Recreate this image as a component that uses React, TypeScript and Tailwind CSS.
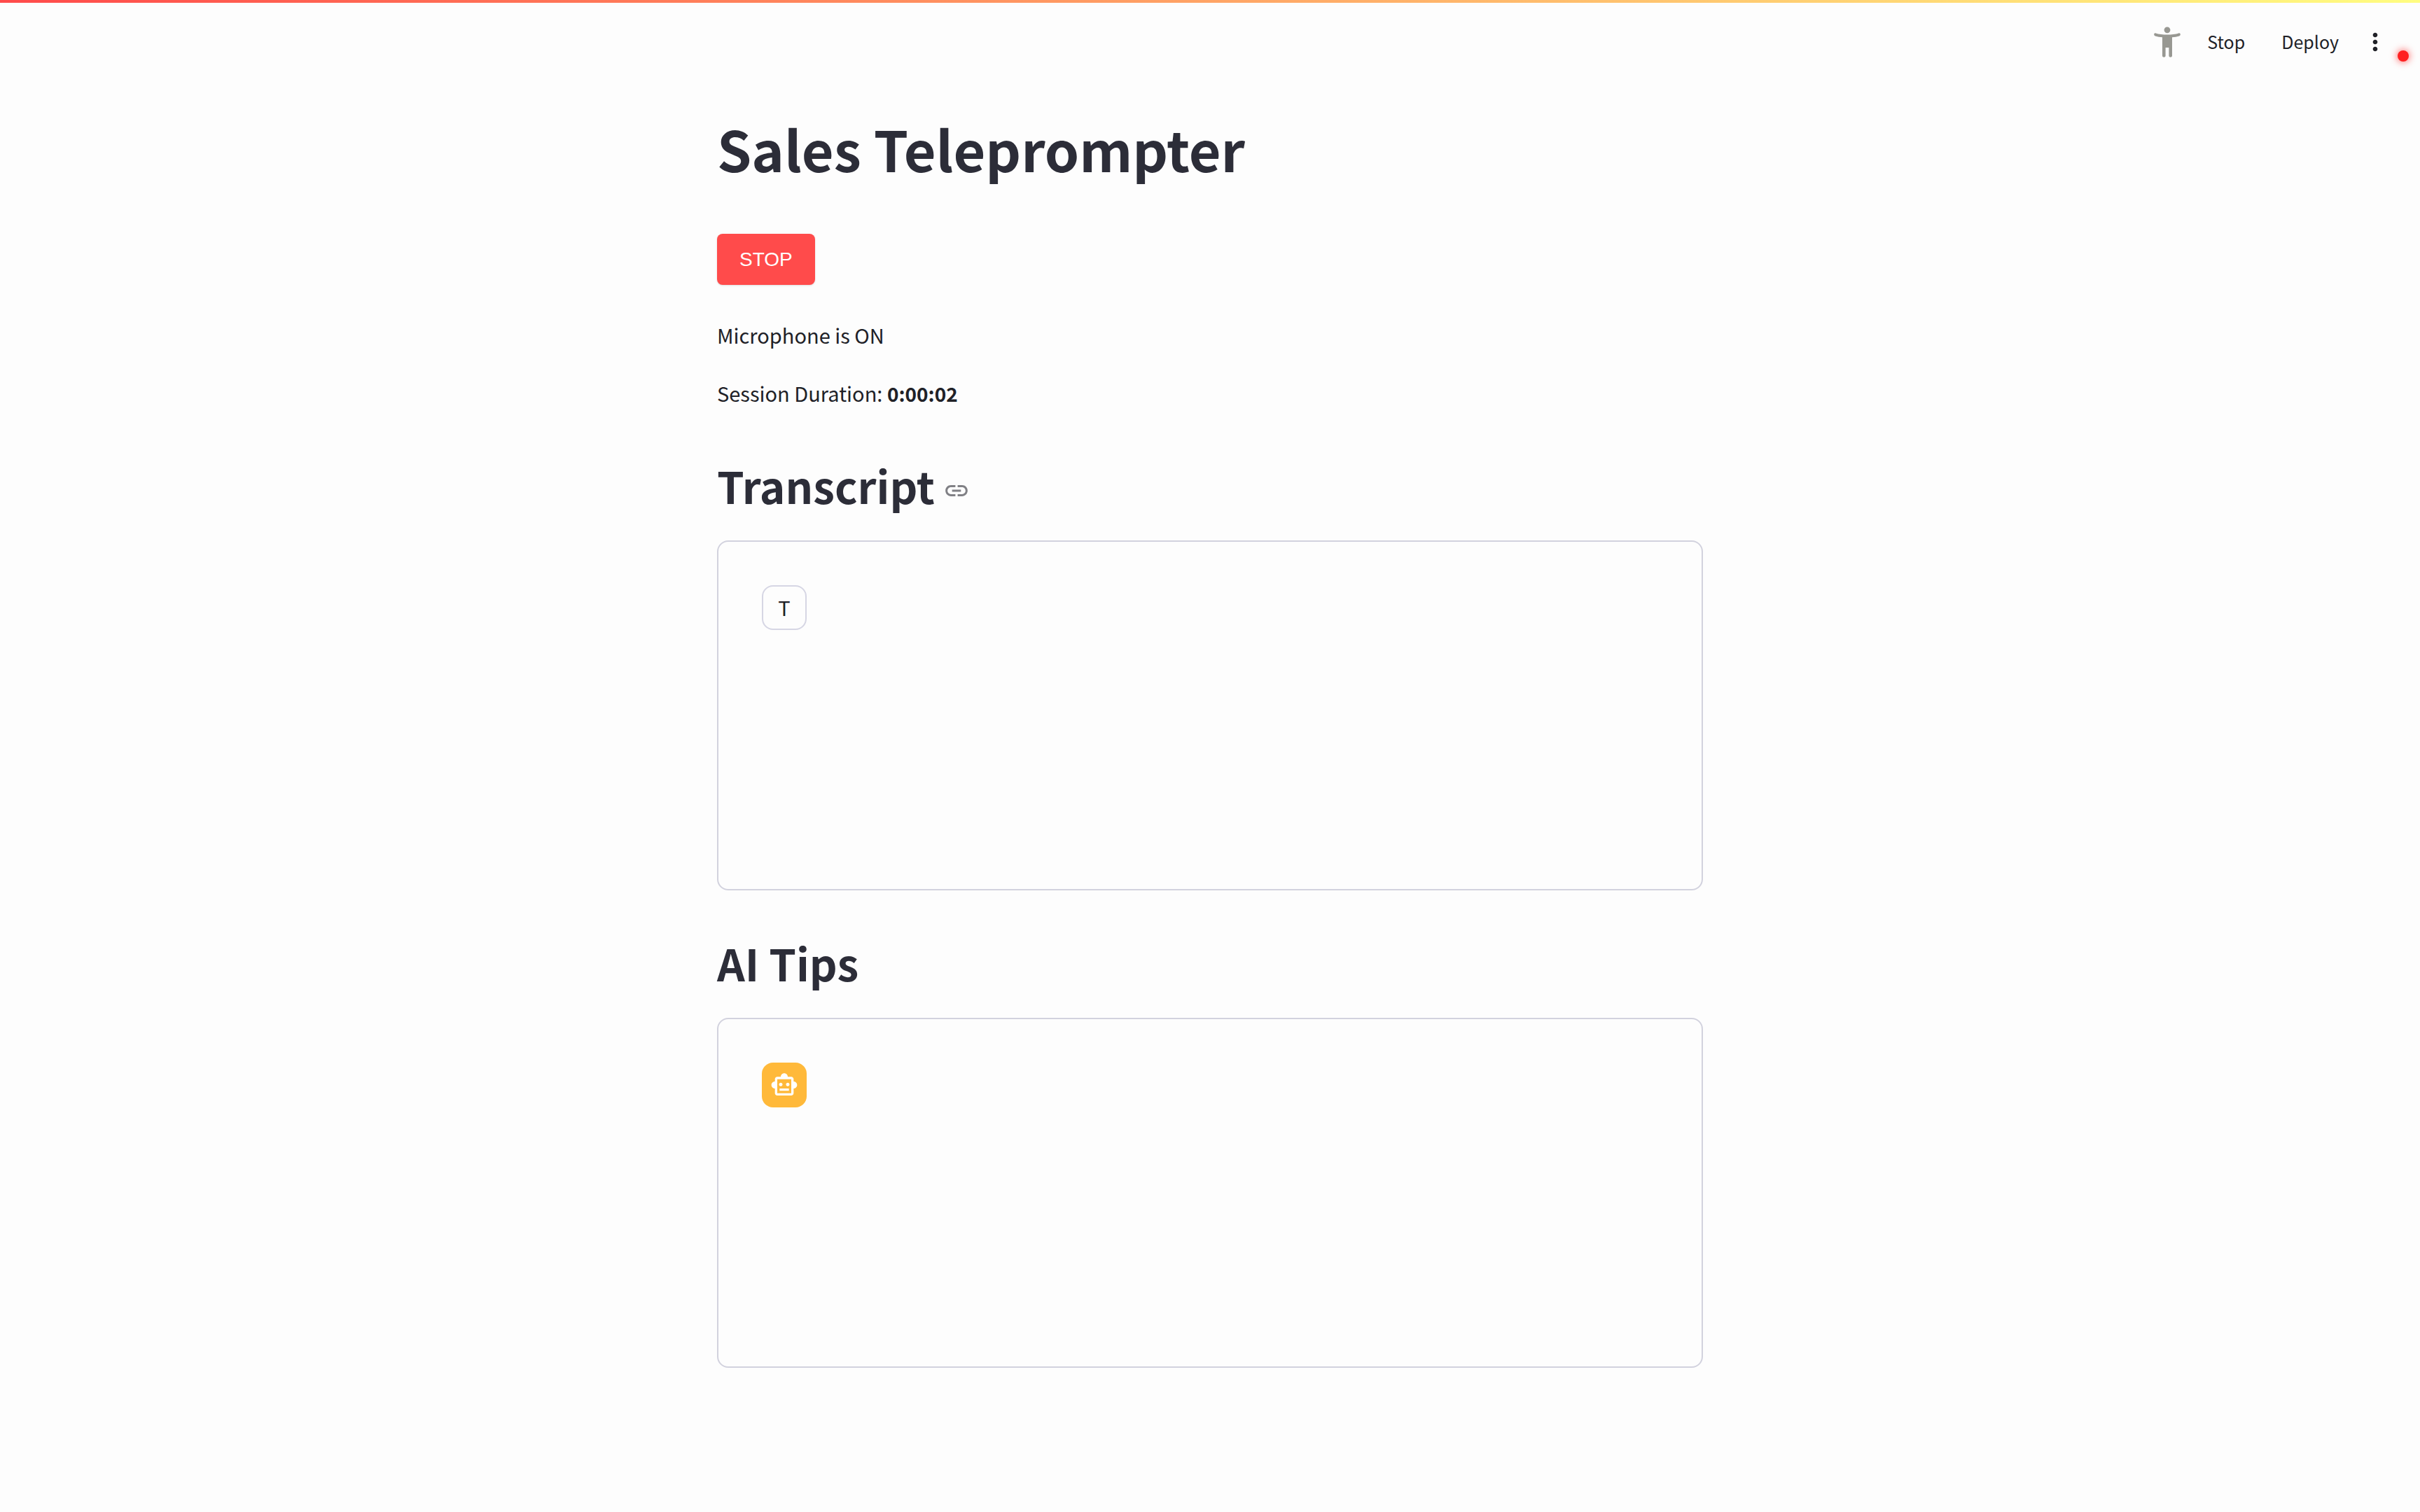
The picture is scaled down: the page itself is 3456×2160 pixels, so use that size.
import React from "react";
import { MdMoreVert, MdLink, MdOutlineSmartToy } from "react-icons/md";

const sans = "font-['Noto_Sans_CJK_SC','Noto_Sans',sans-serif]";

function StatusFigure() {
  return (
    <svg viewBox="0 0 38 44" className="h-11 w-[38px] fill-[#989892]" role="img" aria-label="Running">
      <circle cx="19" cy="4.8" r="4.4" />
      <path d="M2.6 9.4C7 10.8 13 11.4 19 11.4s12-.6 16.400-2c2.600-.8 3.400 3.200.8 4-3.400.9-6.700 1.600-10.200 1.900V41.500c0 3-4.600 3-4.600 0V30h-4.800v11.500c0 3-4.600 3-4.600 0V15.300c-3.500-.3-6.800-1-10.200-1.900-2.600-.8-1.800-4.800.8-4z" />
    </svg>
  );
}

function Panel({ title, link, children }: { title: string; link?: boolean; children: React.ReactNode }) {
  return (
    <section className="flex flex-col">
      <h2 id={title.toLowerCase().replace(" ", "-")} className="flex items-center gap-3 text-[62px] leading-[86px] font-bold text-[#2c2d38]">
        {title}
        {link && (
          <a href="#transcript" aria-label="Link to heading" className="mt-4 text-[#808085]">
            <MdLink className="size-[38px]" />
          </a>
        )}
      </h2>
      <div className="mt-9 h-[500px] rounded-2xl border-2 border-[#d2d2de] p-[62px]">{children}</div>
    </section>
  );
}

export default function App() {
  return (
    <div className={`relative min-h-screen bg-[#fdfdfd] text-[#202127] ${sans}`}>
      <div className="h-1 bg-linear-to-r/srgb from-[#ff4b4b] to-[#fffd80]" />
      <header className="flex h-28 items-center justify-end pr-11 text-[25px]">
        <StatusFigure />
        <button className="ml-[38px]">Stop</button>
        <button className="ml-[52px]">Deploy</button>
        <button className="ml-8" aria-label="Main menu">
          <MdMoreVert className="size-10" />
        </button>
      </header>
      <span className="absolute top-[72px] right-4 size-4 rounded-full bg-[#ff2020] shadow-[0_0_10px_2px_rgba(255,32,32,0.5)]" />
      <main className="mx-auto flex w-full max-w-[1472px] flex-col px-8 pb-24">
        <h1 className="mt-11 text-[79px] leading-[104px] font-bold text-[#2c2d38]">Sales Teleprompter</h1>
        <button className="mt-[70px] h-[73px] self-start rounded-lg bg-[#ff4b4b] px-8 font-['Liberation_Sans',Arial,sans-serif] text-[28px] text-white shadow-sm">
          STOP
        </button>
        <p className="mt-[46px] text-[29px] leading-[51px]">Microphone is ON</p>
        <p className="mt-8 text-[29px] leading-[51px]">
          Session Duration: <strong className="text-[28px]">0:00:02</strong>
        </p>
        <div className="mt-[62px] flex flex-col gap-[60px]">
          <Panel title="Transcript" link>
            <div className="flex size-16 items-center justify-center rounded-2xl border-2 border-[#d6d6e4] text-[29px]">T</div>
          </Panel>
          <Panel title="AI Tips">
            <div className="flex size-16 items-center justify-center rounded-2xl bg-[#ffb93a] text-white">
              <MdOutlineSmartToy className="size-10" />
            </div>
          </Panel>
        </div>
      </main>
    </div>
  );
}
